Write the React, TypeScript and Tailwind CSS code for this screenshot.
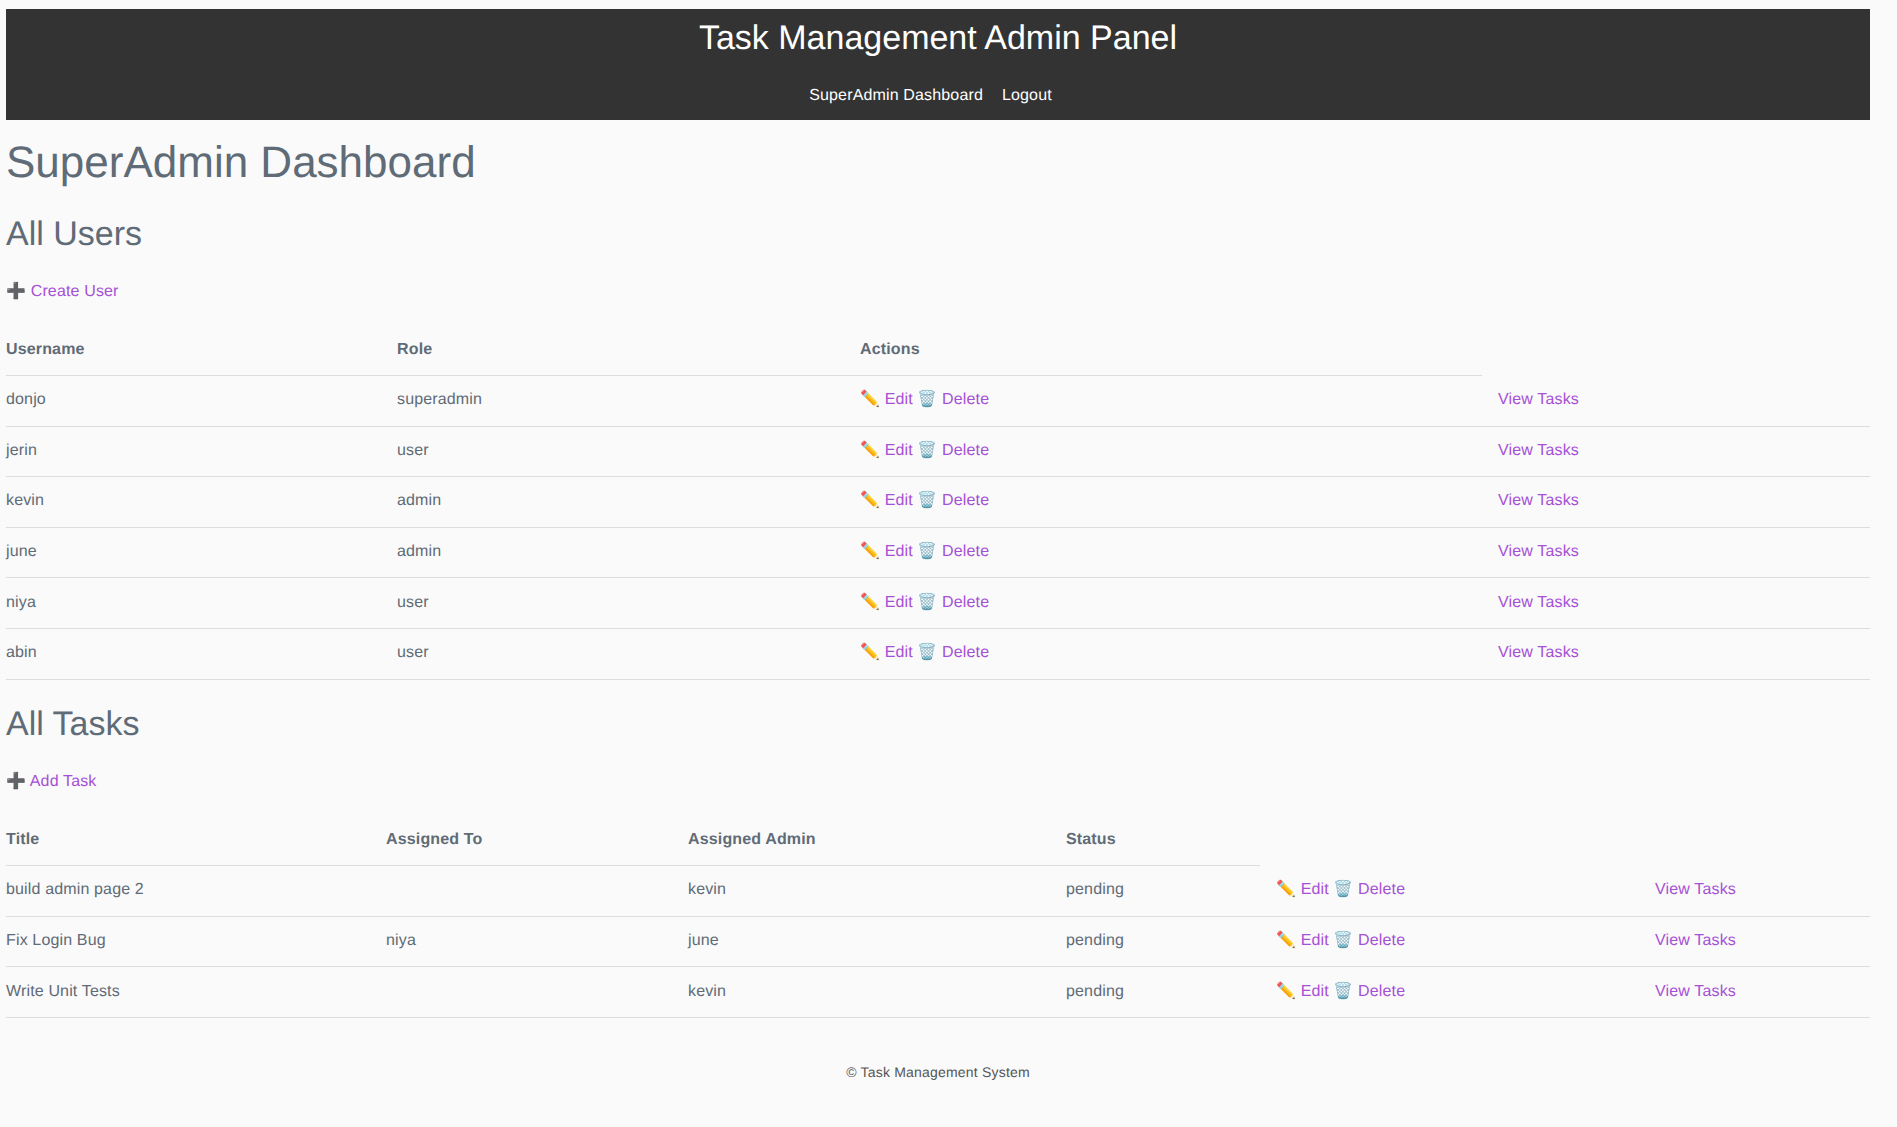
const sans = "font-['Liberation_Sans',Arial,sans-serif]";

const users = [
  ["donjo", "superadmin"],
  ["jerin", "user"],
  ["kevin", "admin"],
  ["june", "admin"],
  ["niya", "user"],
  ["abin", "user"],
];
const tasks = [
  ["build admin page 2", "", "kevin", "pending"],
  ["Fix Login Bug", "niya", "june", "pending"],
  ["Write Unit Tests", "", "kevin", "pending"],
];

const link = "text-[#a650d6]";
const th = "py-[12.8px] px-4 first:pl-0 text-left font-bold border-b border-[#ddd]";
const td = "pt-[12.3px] pb-[13.3px] px-4 first:pl-0 text-left border-b border-[#ddd]";

function Actions() {
  return (
    <>
      <td className={td}>
        ✏️ <a className={link}>Edit</a> 🗑️ <a className={link}>Delete</a>
      </td>
      <td className={td}>
        <a className={link}>View Tasks</a>
      </td>
    </>
  );
}

export default function App() {
  return (
    <div className={`${sans} [text-rendering:geometricPrecision] tracking-[0.15px] bg-[#fafafa] text-[#5f6b76] text-base min-h-[1127px] pl-[6px] pr-[27px] pt-[9px]`}>
      <header className="bg-[#333] text-white text-center h-[111px] pt-[9px]">
        <div className="text-[34px] leading-[41px] tracking-normal">Task Management Admin Panel</div>
        <nav className="mt-[28px] text-base leading-[18px] flex justify-center gap-[19px] pr-[15px]">
          <a>SuperAdmin Dashboard</a>
          <a>Logout</a>
        </nav>
      </header>
      <h1 className="text-[44px] leading-[55px] mt-[15px] tracking-normal">SuperAdmin Dashboard</h1>
      <h2 className="text-[34px] leading-[41px] mt-[24px] tracking-normal">All Users</h2>
      <p className="mt-[25px]">➕ <a className={link}>Create User</a></p>
      <table className="w-full border-collapse mt-[21.4px]">
        <colgroup>
          <col className="w-[375px]" />
          <col className="w-[463px]" />
          <col className="w-[638px]" />
          <col />
        </colgroup>
        <thead>
          <tr>
            <th className={th}>Username</th>
            <th className={th}>Role</th>
            <th className={th}>Actions</th>
          </tr>
        </thead>
        <tbody>
          {users.map((u) => (
            <tr key={u[0]}>
              <td className={td}>{u[0]}</td>
              <td className={td}>{u[1]}</td>
              <Actions />
            </tr>
          ))}
        </tbody>
      </table>
      <h2 className="text-[34px] leading-[41px] mt-[24px] tracking-normal">All Tasks</h2>
      <p className="mt-[25px]">➕ <a className={link}>Add Task</a></p>
      <table className="w-full border-collapse mt-[22px]">
        <colgroup>
          <col className="w-[364px]" />
          <col className="w-[302px]" />
          <col className="w-[378px]" />
          <col className="w-[210px]" />
          <col className="w-[379px]" />
          <col />
        </colgroup>
        <thead>
          <tr>
            <th className={th}>Title</th>
            <th className={th}>Assigned To</th>
            <th className={th}>Assigned Admin</th>
            <th className={th}>Status</th>
          </tr>
        </thead>
        <tbody>
          {tasks.map((t) => (
            <tr key={t[0]}>
              <td className={td}>{t[0]}</td>
              <td className={td}>{t[1]}</td>
              <td className={td}>{t[2]}</td>
              <td className={td}>{t[3]}</td>
              <Actions />
            </tr>
          ))}
        </tbody>
      </table>
      <footer className="text-center text-[14px] text-[#555] mt-[44px] tracking-[0.2px]">© Task Management System</footer>
    </div>
  );
}
